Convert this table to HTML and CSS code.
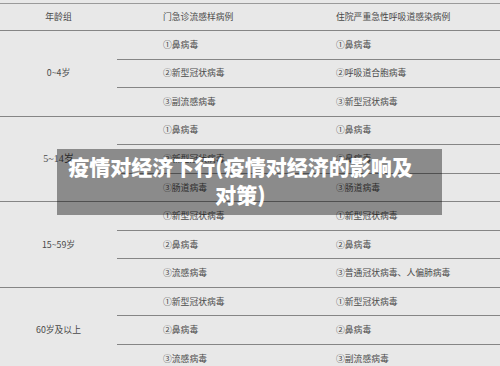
FILE: index.html
```html
<!DOCTYPE html>
<html lang="zh-CN">
<head>
<meta charset="utf-8">
<title>疫情对经济下行</title>
<link rel="stylesheet" href="styles.css">
</head>
<body>
<div class="page">
  <table class="virus-table">
    <colgroup>
      <col class="c-age">
      <col class="c-out">
      <col class="c-in">
    </colgroup>
    <thead>
      <tr class="head">
        <th class="age">年龄组</th>
        <th>门急诊流感样病例</th>
        <th>住院严重急性呼吸道感染病例</th>
      </tr>
    </thead>
    <tbody>
      <tr><td class="age group-end" rowspan="3">0~4岁</td><td>①鼻病毒</td><td>①鼻病毒</td></tr>
      <tr><td>②新型冠状病毒</td><td>②呼吸道合胞病毒</td></tr>
      <tr class="last"><td>③副流感病毒</td><td>③新型冠状病毒</td></tr>

      <tr><td class="age serif group-end" rowspan="3">5~14岁</td><td>①鼻病毒</td><td>①鼻病毒</td></tr>
      <tr><td>②新型冠状病毒</td><td>②鼻病毒</td></tr>
      <tr class="last"><td>③肠道病毒</td><td>③肠道病毒</td></tr>

      <tr><td class="age group-end" rowspan="3">15~59岁</td><td>①新型冠状病毒</td><td>①新型冠状病毒</td></tr>
      <tr><td>②鼻病毒</td><td>②鼻病毒</td></tr>
      <tr class="last"><td>③流感病毒</td><td>③普通冠状病毒、人偏肺病毒</td></tr>

      <tr><td class="age group-end" rowspan="3">60岁及以上</td><td>①新型冠状病毒</td><td>①新型冠状病毒</td></tr>
      <tr><td>②鼻病毒</td><td>②鼻病毒</td></tr>
      <tr class="last"><td>③流感病毒</td><td>③副流感病毒</td></tr>
    </tbody>
  </table>

  <div class="title-box">
    <h1 class="title">疫情对经济下行(疫情对经济的影响及对策)</h1>
  </div>
</div>
</body>
</html>
```

FILE: styles.css
```css
html, body {
  margin: 0;
  padding: 0;
  background: #e8e8e8;
}

.page {
  position: relative;
  width: 500px;
  height: 366px;
  overflow: hidden;
  padding-top: 3px;
  box-sizing: border-box;
}

.virus-table {
  width: 500px;
  border-collapse: collapse;
  table-layout: fixed;
  font-family: "Noto Sans CJK SC", "Noto Sans", sans-serif;
  font-size: 8.8px;
  color: #4a4a4a;
}

.c-age { width: 117px; }
.c-out { width: 173px; }
.c-in { width: 210px; }

.virus-table th,
.virus-table td {
  padding: 0 0 0 46px;
  text-align: left;
  font-weight: normal;
  vertical-align: middle;
  border-bottom: 1px solid #858585;
  white-space: nowrap;
  line-height: 12px;
}

.virus-table th {
  border-top: 1px solid #9a9a9a;
}

.head {
  height: 27px;
}

.virus-table tbody tr {
  height: 28.55px;
}

.virus-table .age {
  padding: 0;
  text-align: center;
}

.serif {
  font-family: "Liberation Serif", "Noto Sans CJK SC", serif;
  font-size: 10px;
}

.title-box {
  position: absolute;
  left: 57px;
  top: 149px;
  width: 385px;
  height: 66px;
  box-sizing: border-box;
  padding: 3px 28px 0 10px;
  background: rgba(0, 0, 0, 0.4);
}

.title {
  margin: 0;
  font-family: "Noto Sans CJK SC", "Noto Sans", sans-serif;
  font-size: 21px;
  font-weight: 900;
  line-height: 28px;
  color: #ffffff;
  text-align: center;
}
```
